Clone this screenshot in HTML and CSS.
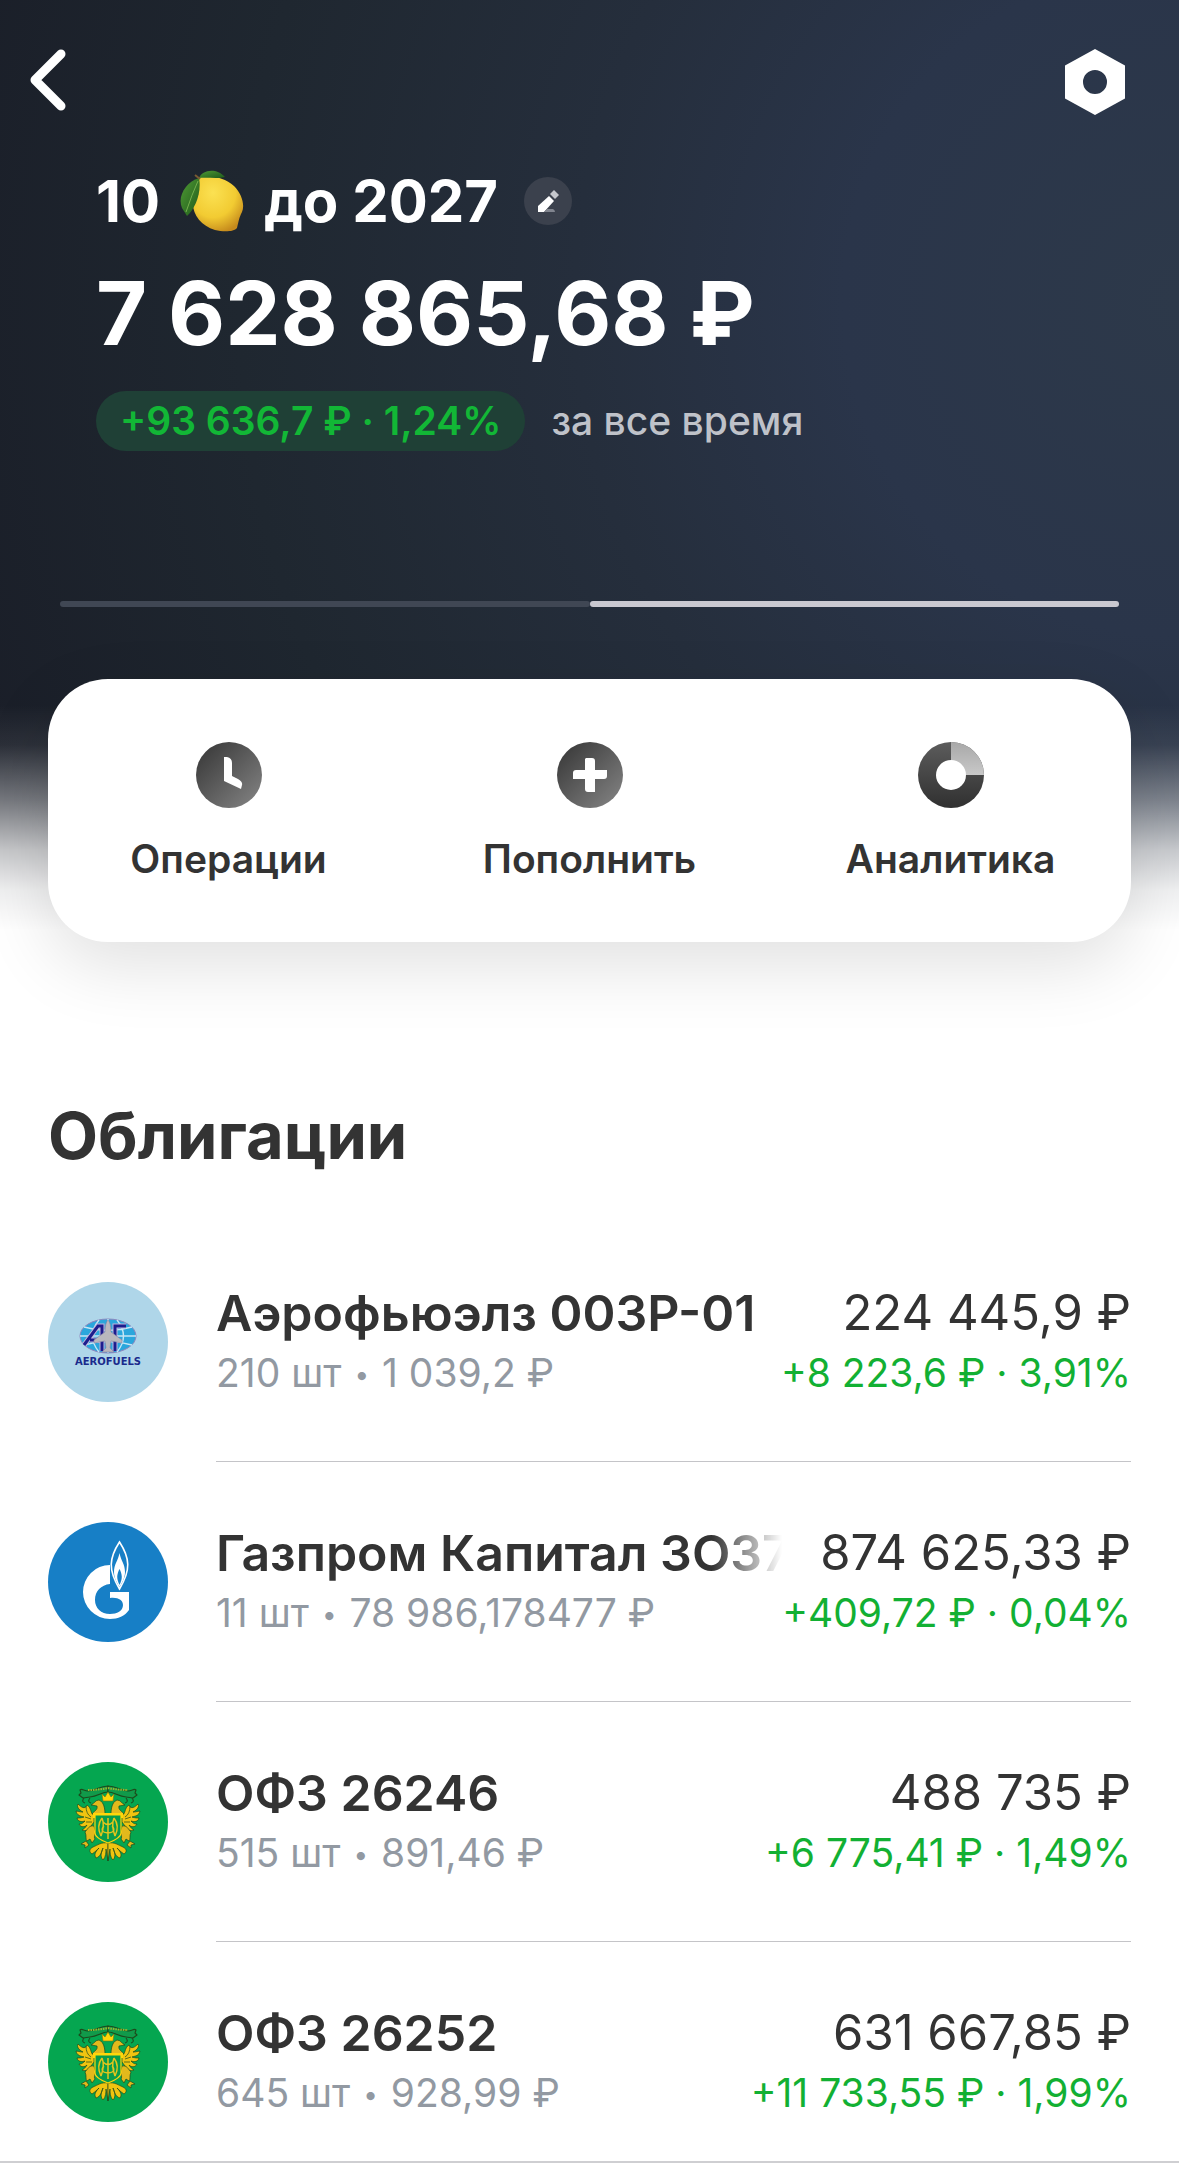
FILE: index.html
```html
<!DOCTYPE html>
<html lang="ru">
<head>
    <meta charset="UTF-8">
    <meta name="viewport" content="width=device-width, initial-scale=1.0">
    <title>Портфель</title>
    <link rel="stylesheet" href="styles.css">
</head>
<body>
    <!-- общие картинки -->
    <svg class="defs" width="0" height="0" aria-hidden="true">
        <defs>
            <linearGradient id="dark" x1="0" y1="0" x2="1" y2="1">
                <stop offset="0.1" stop-color="#3c3c3c"/>
                <stop offset="1" stop-color="#868686"/>
            </linearGradient>
            <linearGradient id="ring" x1="0" y1="0" x2="0" y2="1">
                <stop offset="0" stop-color="#5c5c5c"/>
                <stop offset="1" stop-color="#303030"/>
            </linearGradient>
            <linearGradient id="slice" x1="0" y1="0" x2="0" y2="1">
                <stop offset="0" stop-color="#a8a8a8"/>
                <stop offset="1" stop-color="#c8c8c8"/>
            </linearGradient>
            <radialGradient id="lemon" cx="0.4" cy="0.3" r="0.75">
                <stop offset="0" stop-color="#fbe152"/>
                <stop offset="0.6" stop-color="#f2cb32"/>
                <stop offset="1" stop-color="#c58a1c"/>
            </radialGradient>
            <linearGradient id="leaf" x1="0" y1="0" x2="1" y2="1">
                <stop offset="0" stop-color="#4f9a34"/>
                <stop offset="1" stop-color="#1f5a1b"/>
            </linearGradient>
            <g id="eagle-half" stroke="#1d4a1c" stroke-width="0.7" stroke-linejoin="round">
                <path d="M60 24 C51 24 48 29 40 29 C36 29 34 26 32 28 L33 31 L31 33 L35 36 L42 35 C50 34 54 30 60 30 Z" fill="#119a4a" stroke-width="1.1"/>
                <path d="M36 36 Q33 40 37 41 M42 36 Q39 40 43 41" fill="none" stroke-width="1.1"/>
                <path d="M57 52 C57 47 56 40 51 38 C47 38 46 42 43 43 L49 44 C50 48 46 49 44 52 Z" fill="#e3b91c"/>
                <path d="M46 53 C42 52 44 46 39 43 C37 48 33 45 30 42 C28 46 33 49 35 50 C32 50 29 49 28 49 C29 54 33 54 36 55 C33 56 31 56 29 56 C30 60 34 60 37 59 C34 62 33 62 31 62 C33 66 37 65 39 63 C37 66 36 67 34 68 C38 70 42 67 43 64 L46 60 Z" fill="#f0c410"/>
                <path d="M38 44 Q38 52 43 55 M37 55 L43 57 M38 60 L44 60" fill="none"/>
                <path d="M46 64 C41 63 40 67 37 70 C39 74 37 77 39 79 L42 77 L44 81 L47 77 C45 74 49 71 47 68 Z" fill="#e3b91c"/>
                <path d="M38 79 L33 82 L37 83 L37 86 L41 83 Z" fill="#e3b91c"/>
                <path d="M60 81 C53 80 50 83 45 85 C41 87 41 90 44 92 C47 90 49 88 51 86 C47 90 46 93 48 96 C52 95 54 90 55 86 C52 92 53 96 55 98 C58 95 58 90 58 87 L60 99 Z" fill="#f0c410"/>
            </g>
            <g id="emblem">
                <circle cx="60" cy="60" r="60" fill="#05a650"/>
                <use href="#eagle-half"/>
                <use href="#eagle-half" transform="translate(120 0) scale(-1 1)"/>
                <path d="M40 28 Q50 28 60 26 Q70 28 80 28" stroke="#a3b32d" stroke-width="2" stroke-dasharray="1.5 1" fill="none"/>
                <path d="M55 39 L54 32 L57 35 L60 30 L63 35 L66 32 L65 39 Z" fill="#ffd60a" stroke="#7d7410" stroke-width="0.6"/>
                <path d="M45 51 H75 V56 H45 Z" fill="#ffd60a"/>
                <path d="M47 53 H73 V71 Q73 76 60 81 Q47 76 47 71 Z" fill="#079c4b" stroke="#ffd60a" stroke-width="1.2"/>
                <path d="M54 56 Q48 64 53 74 M54 56 Q57 63 53 74 M66 56 Q72 64 67 74 M66 56 Q63 63 67 74 M60 56 V77 M55 60 Q60 65 65 60 M56 64 Q51 70 60 71 Q69 70 64 64" fill="none" stroke="#e3c51c" stroke-width="1.5"/>
            </g>
        </defs>
    </svg>

    <div class="page">
        <header class="header">
            <nav class="topbar">
                <button class="icon-btn" type="button" aria-label="Назад">
                    <svg width="36" height="62" viewBox="0 0 36 62"><path d="M31 5 L5 31 L31 57" fill="none" stroke="#fff" stroke-width="9" stroke-linecap="round" stroke-linejoin="round"/></svg>
                </button>
                <button class="icon-btn" type="button" aria-label="Настройки">
                    <svg width="60" height="66" viewBox="0 0 60 66"><path fill="#fff" fill-rule="evenodd" d="M30 0 L60 16.5 V49.5 L30 66 L0 49.5 V16.5 Z M30 21 A12 12 0 1 0 30 45 A12 12 0 1 0 30 21 Z"/></svg>
                </button>
            </nav>

            <div class="summary">
                <div class="goal">
                    <h1 class="goal-name">10
                        <svg class="lemon" width="64" height="62" viewBox="0 0 64 62" role="img" aria-label="лимон">
                            <path d="M20 7 C30 4 45 8 54 16 C62 24 65 35 62 42 C59 48 59 50 57 58 C54 62 43 62 35 60 C21 56 12 44 13 32 C14 22 16 12 20 7 Z" fill="url(#lemon)"/>
                            <path d="M19 8 C22 0 36 -3 45 7 C37 9 27 7 19 8 Z" fill="url(#leaf)"/>
                            <path d="M19 8 C6 12 -3 26 2 38 L7 46 C15 39 22 22 19 8 Z" fill="url(#leaf)"/>
                            <path d="M18 11 Q12 24 6 42" stroke="#74b04d" stroke-width="1" fill="none"/>
                            <path d="M15 5 L20 9" stroke="#7a5a33" stroke-width="2"/>
                        </svg>
                        до 2027</h1>
                    <button class="edit" type="button" aria-label="Изменить">
                        <svg width="24" height="24" viewBox="0 0 24 24">
                            <path d="M2 23 V17 L13 7 L18 12 L8 23 Z" fill="#fff"/>
                            <path d="M14 5 L18 1 L23 6 L19 10 Z" fill="#c5c7cd"/>
                            <path d="M8 23 L11 20 H17 Q19 21 19 23 Z" fill="#81858f"/>
                        </svg>
                    </button>
                </div>
                <p class="total">7 628 865,68 ₽</p>
                <div class="profit">
                    <span class="badge">+93 636,7 ₽ · 1,24%</span>
                    <span class="period">за все время</span>
                </div>
            </div>

            <div class="pager">
                <span class="pager-item"></span>
                <span class="pager-item active"></span>
            </div>

            <div class="actions">
                <button class="action" type="button">
                    <svg width="66" height="66" viewBox="0 0 66 66"><circle cx="33" cy="33" r="33" fill="url(#dark)"/><path d="M28 15 H31 Q36 16 36 21 V34 L42 37 Q47 40 46 43 L45 47 L28 39 Z" fill="#fff"/></svg>
                    Операции
                </button>
                <button class="action" type="button">
                    <svg width="66" height="66" viewBox="0 0 66 66"><circle cx="33" cy="33" r="33" fill="url(#dark)"/><path d="M29 16 H35 Q38 16 38 19 V28 H50 V34 Q50 37 47 37 H38 V50 H31 Q28 50 28 47 V37 H16 V31 Q16 28 19 28 H28 V17 Z" fill="#fff"/></svg>
                    Пополнить
                </button>
                <button class="action" type="button">
                    <svg width="66" height="66" viewBox="0 0 66 66"><circle cx="33" cy="33" r="33" fill="url(#ring)"/><path d="M33 0 A33 33 0 0 1 66 33 H33 Z" fill="url(#slice)"/><circle cx="33" cy="33" r="15" fill="#fff"/></svg>
                    Аналитика
                </button>
            </div>
        </header>

        <main class="bonds">
            <h2>Облигации</h2>
            <ul class="list">
                <li>
                    <a class="bond" href="#">
                        <svg class="logo" viewBox="0 0 120 120" aria-hidden="true">
                            <circle cx="60" cy="60" r="60" fill="#afd6e9"/>
                            <ellipse cx="60" cy="54" rx="28" ry="17" fill="#2ba6dc" stroke="#8f86bd" stroke-width="1"/>
                            <path d="M32 54 H88 M36 45 Q60 52 84 45 M36 63 Q60 56 84 63 M60 37 V71 M51 38 Q38 54 51 70 M69 38 Q82 54 69 70" fill="none" stroke="#c6e6f5" stroke-width="1.4"/>
                            <path d="M36 63 L50 44 H54 V69 M42 58 H54 M67 69 V44 H78" fill="none" stroke="#c2b4dc" stroke-width="5"/>
                            <path d="M36 63 L50 44 H54 V69 M42 58 H54 M67 69 V44 H78" fill="none" stroke="#1d1d8d" stroke-width="3"/>
                            <path d="M60 38 Q63 41 63 50 L74 58 V61 L63 59 L62 66 L66 70 H54 L58 66 L57 59 L46 61 V58 L57 50 Q57 41 60 38 Z" fill="#b9b8bd" stroke="#8683a5" stroke-width="0.6"/>
                            <text class="logo-text" x="60" y="83" text-anchor="middle">AEROFUELS</text>
                        </svg>
                        <span class="info">
                            <span class="line">
                                <span class="name">Аэрофьюэлз 003Р-01</span>
                                <span class="value">224 445,9 ₽</span>
                            </span>
                            <span class="line small">
                                <span class="count">210 шт <span class="dot">•</span> 1 039,2 ₽</span>
                                <span class="gain">+8 223,6 ₽ · 3,91%</span>
                            </span>
                        </span>
                    </a>
                </li>
                <li>
                    <a class="bond" href="#">
                        <svg class="logo" viewBox="0 0 120 120" aria-hidden="true">
                            <circle cx="60" cy="60" r="60" fill="#177fc6"/>
                            <path d="M62 43 A27 27 0 0 0 62 97 C70 97 77 94 81 88 V70 H62 V76 C70 75 75 78 75 83 C75 89 69 92 62 92 C53 92 47 86 47 78 C47 69 53 63 62 62 Z" fill="#fff"/>
                            <path d="M71.5 20 C61 36 60 48 71.5 67 C83 48 82 36 71.5 20 Z" fill="#177fc6" stroke="#fff" stroke-width="1.6"/>
                            <path d="M71.5 31 C70 39 66 42 66 50 C66 56 69 61 71.5 65 C74 61 77 56 77 50 C77 42 73 39 71.5 31 Z" fill="#fff"/>
                            <path d="M71.5 47 C69 52 68 56 71.5 63 C75 56 74 52 71.5 47 Z" fill="#177fc6"/>
                        </svg>
                        <span class="info">
                            <span class="line">
                                <span class="name fade">Газпром Капитал ЗО37</span>
                                <span class="value">874 625,33 ₽</span>
                            </span>
                            <span class="line small">
                                <span class="count">11 шт <span class="dot">•</span> 78 986,178477 ₽</span>
                                <span class="gain">+409,72 ₽ · 0,04%</span>
                            </span>
                        </span>
                    </a>
                </li>
                <li>
                    <a class="bond" href="#">
                        <svg class="logo" viewBox="0 0 120 120" aria-hidden="true"><use href="#emblem"/></svg>
                        <span class="info">
                            <span class="line">
                                <span class="name">ОФЗ 26246</span>
                                <span class="value">488 735 ₽</span>
                            </span>
                            <span class="line small">
                                <span class="count">515 шт <span class="dot">•</span> 891,46 ₽</span>
                                <span class="gain">+6 775,41 ₽ · 1,49%</span>
                            </span>
                        </span>
                    </a>
                </li>
                <li>
                    <a class="bond" href="#">
                        <svg class="logo" viewBox="0 0 120 120" aria-hidden="true"><use href="#emblem"/></svg>
                        <span class="info">
                            <span class="line">
                                <span class="name">ОФЗ 26252</span>
                                <span class="value">631 667,85 ₽</span>
                            </span>
                            <span class="line small">
                                <span class="count">645 шт <span class="dot">•</span> 928,99 ₽</span>
                                <span class="gain">+11 733,55 ₽ · 1,99%</span>
                            </span>
                        </span>
                    </a>
                </li>
            </ul>
        </main>

        <footer class="bottom-line"></footer>
    </div>
</body>
</html>
```
FILE: styles.css
```css
* {
    box-sizing: border-box;
}
body {
    margin: 0;
    background-color: #fff;
    color: #333;
    font-family: Inter, "Liberation Sans", sans-serif;
}
h1, h2, p, ul {
    margin: 0;
    padding: 0;
}
button {
    padding: 0;
    border: 0;
    background: none;
    font-family: inherit;
    color: inherit;
    cursor: pointer;
}
svg {
    display: block;
}
.defs {
    position: absolute;
}
.page {
    display: flex;
    flex-direction: column;
    min-height: 100vh;
}

/* шапка */
.header {
    padding: 49px 48px 0;
    color: #fff;
    background:
        linear-gradient(to bottom, rgba(255, 255, 255, 0) 705px, rgba(255, 255, 255, 0.08) 745px, rgba(255, 255, 255, 0.4) 800px, rgba(255, 255, 255, 0.75) 850px, rgba(255, 255, 255, 0.93) 890px, #fff 930px),
        radial-gradient(circle at 100% 300px, #2d394a 0, #2a354a 25%, #252e3c 45%, #1f2730 70%, #1a1e28 95%);
}
.topbar {
    display: flex;
    align-items: flex-start;
    justify-content: space-between;
    margin: 0 6px 0 -18px;
    height: 66px;
}
.summary {
    padding: 48px 48px 0;
}
.goal {
    display: flex;
    align-items: center;
    gap: 26px;
    height: 76px;
}
.goal-name {
    display: flex;
    align-items: center;
    gap: 20px;
    font-size: 58px;
    font-weight: 700;
    line-height: 76px;
}
.edit {
    display: flex;
    align-items: center;
    justify-content: center;
    width: 48px;
    height: 48px;
    border-radius: 50%;
    background-color: #3b414d;
}
.total {
    margin-top: 20px;
    font-size: 88px;
    font-weight: 700;
    line-height: 108px;
    white-space: nowrap;
}
.profit {
    display: flex;
    align-items: center;
    gap: 26px;
    margin-top: 24px;
    font-size: 39px;
    font-weight: 500;
    line-height: 60px;
}
.badge {
    padding: 0 24px;
    border-radius: 30px;
    background-color: #1f4036;
    color: #12b736;
    font-weight: 600;
}
.period {
    color: #bfc2c9;
}
.pager {
    display: flex;
    margin: 150px 12px 0;
}
.pager-item {
    flex: 1;
    height: 6px;
    border-radius: 3px;
    background-color: #404754;
}
.pager-item.active {
    background-color: #cac9d1;
}
.actions {
    display: grid;
    grid-template-columns: repeat(3, 1fr);
    margin-top: 72px;
    padding: 63px 0 58px;
    border-radius: 60px;
    background-color: #fff;
    box-shadow: 0 24px 70px rgba(0, 0, 0, 0.12);
    color: #333;
}
.action {
    display: flex;
    flex-direction: column;
    align-items: center;
    gap: 26px;
    font-size: 39px;
    font-weight: 600;
    line-height: 50px;
}

/* список облигаций */
.bonds {
    padding: 154px 48px 0;
}
.bonds h2 {
    font-size: 65px;
    font-weight: 700;
    line-height: 80px;
}
.list {
    list-style: none;
    margin-top: 46px;
}
.bond {
    display: grid;
    grid-template-columns: 120px 1fr;
    column-gap: 48px;
    color: inherit;
    text-decoration: none;
}
.logo {
    width: 120px;
    height: 120px;
    margin-top: 60px;
}
.logo-text {
    font-family: "DejaVu Sans", sans-serif;
    font-size: 10px;
    font-weight: 700;
    fill: #1a2a8c;
}
.info {
    min-width: 0;
    height: 240px;
    padding: 60px 0;
    border-bottom: 1px solid #c4c4c8;
}
li:last-child .info {
    height: 180px;
    padding-bottom: 0;
    border-bottom: 0;
}
.line {
    display: flex;
    justify-content: space-between;
    gap: 38px;
    font-size: 49px;
    line-height: 62px;
    white-space: nowrap;
}
.line.small {
    font-size: 39px;
    line-height: 58px;
}
.name {
    min-width: 0;
    overflow: hidden;
    font-size: 50px;
    font-weight: 600;
}
.name.fade {
    -webkit-mask-image: linear-gradient(to left, transparent, #000 70px);
    mask-image: linear-gradient(to left, transparent, #000 70px);
}
.count {
    color: #9299a2;
}
.dot {
    margin: 0 2px;
    font-size: 26px;
    vertical-align: 3px;
    line-height: 1;
}
.gain {
    color: #12b033;
}
.bottom-line {
    margin-top: auto;
    border-top: 2px solid #cfcfd2;
}
```
